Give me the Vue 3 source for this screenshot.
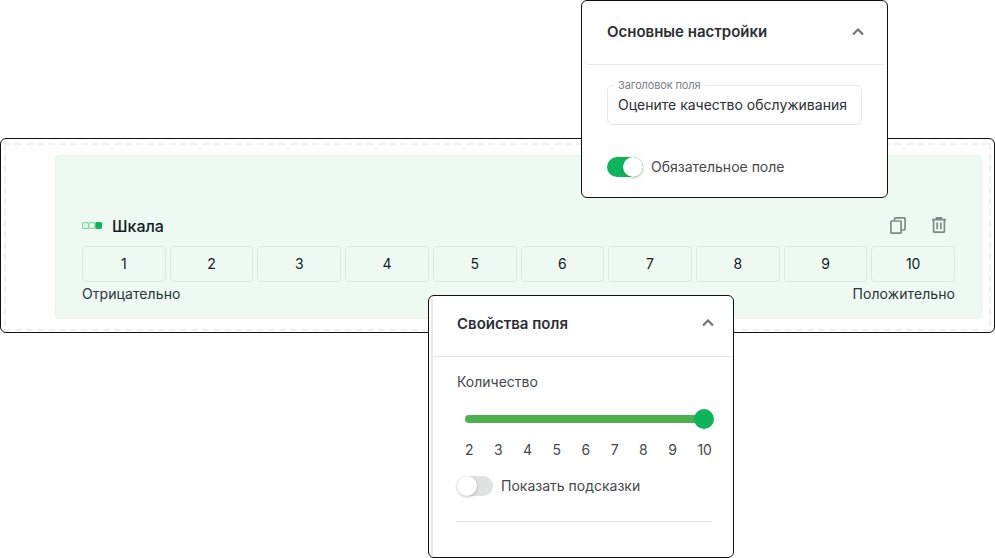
<script setup>
const scale = [1, 2, 3, 4, 5, 6, 7, 8, 9, 10]
const ticks = [2, 3, 4, 5, 6, 7, 8, 9, 10]
</script>

<template>
  <div class="page">
    <section class="frame">
      <div class="dashed">
        <div class="field">
          <div class="field-head">
            <div class="title-wrap">
              <svg class="scale-icon" width="20" height="7" viewBox="0 0 20 7" fill="none">
                <rect x="0.6" y="0.6" width="5.8" height="5.8" rx="1" stroke="#7fdca6" stroke-width="1.2" />
                <rect x="7" y="0.6" width="5.8" height="5.8" rx="1" stroke="#7fdca6" stroke-width="1.2" />
                <rect x="13.4" y="0" width="6.6" height="7" rx="1.5" fill="#0eb45a" />
              </svg>
              <span class="title">Шкала</span>
            </div>
            <div class="actions">
              <svg width="16" height="17" viewBox="0 0 16 17" fill="none" stroke="#7f8a86" stroke-width="1.7">
                <rect x="0.9" y="4" width="10.2" height="12.2" rx="0.8" />
                <path d="M4.6 3.6V1.6a.8.8 0 0 1 .8-.8h8.9a.8.8 0 0 1 .8.8v10.6a.8.8 0 0 1-.8.8h-2.8" />
              </svg>
              <svg width="14" height="16" viewBox="0 0 14 16" fill="none" stroke="#7f8a86" stroke-width="1.7">
                <path d="M0 2.6h14M1.6 2.6v11.6a1 1 0 0 0 1 1h8.8a1 1 0 0 0 1-1V2.6M4.6 2.6V.9h4.8v1.7M5.2 5.6v6.6M8.8 5.6v6.6" />
              </svg>
            </div>
          </div>
          <div class="cells">
            <div v-for="n in scale" :key="n" class="cell"><span>{{ n }}</span></div>
          </div>
          <div class="ends">
            <span>Отрицательно</span>
            <span>Положительно</span>
          </div>
        </div>
      </div>
    </section>

    <aside class="panel panel-main">
      <header class="panel-head">
        <h3>Основные настройки</h3>
        <svg class="chev" width="12" height="8" viewBox="0 0 12 8" fill="none">
          <path d="M1 6.5l5-5 5 5" stroke="#73767a" stroke-width="2.2" />
        </svg>
      </header>
      <div class="panel-body-main">
        <div class="input">
          <span class="legend">Заголовок поля</span>
          <span class="value">Оцените качество обслуживания</span>
        </div>
        <div class="toggle-row">
          <span class="switch on"><i></i></span>
          <span>Обязательное поле</span>
        </div>
      </div>
    </aside>

    <aside class="panel panel-props">
      <div class="props-inner">
        <header class="props-head">
          <h3>Свойства поля</h3>
          <svg class="chev" width="12" height="8" viewBox="0 0 12 8" fill="none">
            <path d="M1 6.5l5-5 5 5" stroke="#73767a" stroke-width="2.2" />
          </svg>
        </header>
        <div class="panel-body-props">
          <div class="label">Количество</div>
          <div class="slider"><i></i></div>
          <div class="ticks">
            <span v-for="t in ticks" :key="t">{{ t }}</span>
          </div>
          <div class="toggle-row hints">
            <span class="switch off"><i></i></span>
            <span>Показать подсказки</span>
          </div>
          <div class="rule"></div>
        </div>
      </div>
    </aside>
  </div>
</template>

<style>
html, body { margin: 0; background: #fff; overflow: hidden; }
</style>

<style scoped>
.page {
  position: relative;
  width: 995px;
  height: 558px;
  padding-top: 138px;
  box-sizing: border-box;
  font-family: Inter, "Noto Sans", sans-serif;
  color: #141c26;
  overflow: hidden;
}
.frame {
  height: 195px;
  box-sizing: border-box;
  border: 1px solid #111;
  border-radius: 6px;
  padding: 4px 3px 1px;
  background: #fff;
}
.dashed {
  height: 100%;
  box-sizing: border-box;
  padding: 12px 9px 12px 51px;
  background-image:
    repeating-linear-gradient(90deg, #f0f1f1 0 7px, transparent 7px 11px),
    repeating-linear-gradient(90deg, #f0f1f1 0 7px, transparent 7px 11px),
    repeating-linear-gradient(180deg, #f0f1f1 0 7px, transparent 7px 11px),
    repeating-linear-gradient(180deg, #f0f1f1 0 7px, transparent 7px 11px);
  background-size: 100% 2px, 100% 2px, 2px 100%, 2px 100%;
  background-position: 0 0, 0 100%, 0 0, 100% 0;
  background-repeat: no-repeat;
}
.field {
  height: 100%;
  box-sizing: border-box;
  background: #eefaf1;
  border: 1px solid #ebf3ed;
  border-radius: 4px;
  padding: 58px 26px 0;
}
.field-head {
  display: flex;
  justify-content: space-between;
  align-items: center;
  height: 24px;
  margin-bottom: 8px;
}
.title-wrap { display: flex; align-items: center; gap: 10px; }
.scale-icon { margin-top: -2px; }
.title { font-size: 16px; font-weight: 500; }
.actions { display: flex; align-items: center; gap: 26px; padding-right: 9px; margin-top: -2px; }
.cells { display: flex; gap: 4px; }
.cell {
  flex: 1;
  height: 36px;
  box-sizing: border-box;
  border: 1px solid #dde6e0;
  border-radius: 4px;
  display: flex;
  align-items: center;
  justify-content: center;
  padding-bottom: 2px;
  font-size: 14px;
}
.ends {
  display: flex;
  justify-content: space-between;
  font-size: 14px;
  line-height: 17px;
  letter-spacing: 0.08px;
  margin-top: 3px;
  color: #2a3340;
}
.panel {
  position: absolute;
  box-sizing: border-box;
  background: #fff;
  border: 1px solid #111;
  border-radius: 6px;
}
.panel-main { left: 581px; top: 0; width: 307px; height: 198px; }
.panel-props { left: 428px; top: 295px; width: 306px; height: 263px; }
.panel-head {
  display: flex;
  justify-content: space-between;
  align-items: center;
  height: 64px;
  box-sizing: border-box;
  margin: 0 1px;
  padding: 0 21px 2px 23px;
  border: 1px solid transparent;
  border-top: 0;
  border-bottom-color: #e6e7e8;
  border-radius: 0 0 5px 5px;
}
.props-inner {
  height: calc(100% - 4px);
  margin: 2px 0 0 2px;
  border-left: 2px solid #e9eaea;
}
.props-head {
  display: flex;
  justify-content: space-between;
  align-items: center;
  height: 59px;
  box-sizing: border-box;
  padding: 0 19px 8px 24px;
  border-bottom: 1px solid #e6e7e8;
}
h3 { margin: 0; font-size: 15px; font-weight: 600; color: #2b2e33; }
.panel-body-main { padding: 20px 25px 0; }
.input {
  position: relative;
  box-sizing: border-box;
  height: 40px;
  border: 1px solid #e6e7e8;
  border-radius: 6px;
  padding: 0 10px 2px;
  display: flex;
  align-items: center;
  font-size: 14px;
  color: #2b2e33;
  white-space: nowrap;
}
.legend {
  position: absolute;
  left: 5px;
  top: -7px;
  padding: 0 5px;
  background: #fff;
  font-size: 11px;
  line-height: 13px;
  letter-spacing: -0.15px;
  color: #7b7f85;
}
.toggle-row {
  display: flex;
  align-items: center;
  gap: 8px;
  font-size: 14px;
  line-height: 18px;
  color: #45484d;
  margin-top: 32px;
}
.switch {
  position: relative;
  width: 36px;
  height: 20px;
  border-radius: 10px;
  flex: none;
}
.switch.on { background: #0eb45a; }
.switch.off { background: #dfe1e3; }
.switch i {
  position: absolute;
  top: 0;
  width: 20px;
  height: 20px;
  border-radius: 50%;
  background: #fff;
  box-shadow: 0 1px 3px rgba(0, 0, 0, 0.25);
}
.switch.on i { right: 0; }
.switch.off i { left: 0; }
.panel-body-props { padding: 16px 21px 0 24px; }
.label { font-size: 14px; line-height: 17px; color: #45484d; }
.slider {
  position: relative;
  height: 8px;
  margin: 25px 0 0 8px;
  width: 240px;
  background: #4caf50;
  border-radius: 4px;
}
.slider i {
  position: absolute;
  right: -9px;
  top: -6px;
  width: 20px;
  height: 20px;
  border-radius: 50%;
  background: #0eb45a;
}
.ticks {
  display: flex;
  justify-content: space-between;
  margin: 18px 0 0 8px;
  width: 247px;
  font-size: 14px;
  line-height: 17px;
  color: #45484d;
}
.hints { margin-top: 18px; }
.rule { height: 1px; background: #e0e2e3; margin-top: 25px; }
</style>
